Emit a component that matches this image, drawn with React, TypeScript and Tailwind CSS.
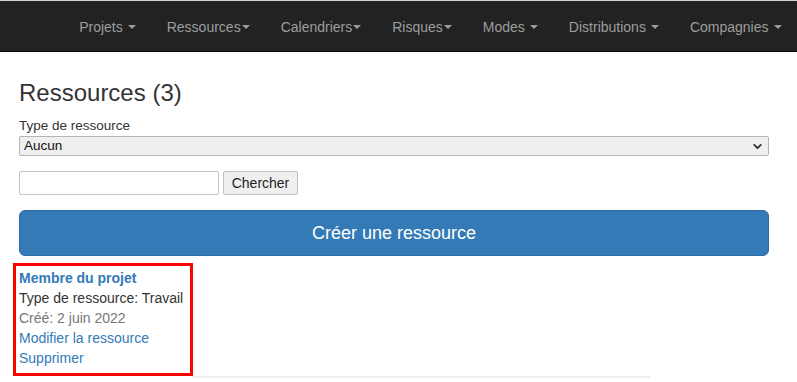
import { ChevronDown } from "lucide-react";

const NAV_ITEMS = [
  { label: "Projets", spaced: true },
  { label: "Ressources", spaced: false },
  { label: "Calendriers", spaced: false },
  { label: "Risques", spaced: false },
  { label: "Modes", spaced: true },
  { label: "Distributions", spaced: true },
  { label: "Compagnies", spaced: true },
];

function Caret() {
  return (
    <span className="inline-block h-0 w-0 border-x-4 border-t-4 border-x-transparent border-t-[#9d9d9d] align-middle" />
  );
}

function Navbar() {
  return (
    <nav className="flex h-[52px] items-center justify-end border-t border-b border-t-[#d0d0d0] border-b-[#080808] bg-[#222222] pt-[1px]">
      <ul className="flex">
        {NAV_ITEMS.map((item) => (
          <li key={item.label}>
            <a className="flex items-center px-[15.5px] text-[14px] leading-5 text-[#9d9d9d]">
              {item.label}
              <span className={item.spaced ? "ml-[5px] flex" : "ml-[1px] flex"}>
                <Caret />
              </span>
            </a>
          </li>
        ))}
      </ul>
    </nav>
  );
}

function ResourceCard() {
  return (
    <div className="ml-[13px] w-[180px] border-[3px] border-[#ff0000] px-[3px] pt-[2px] pb-[5px] text-[14px] leading-5">
      <a className="block font-bold text-[#337ab7]">Membre du projet</a>
      <p className="text-[#333333]">Type de ressource: Travail</p>
      <p className="text-[#777777]">Créé: 2 juin 2022</p>
      <a className="block text-[#337ab7]">Modifier la ressource</a>
      <a className="block text-[#337ab7]">Supprimer</a>
    </div>
  );
}

export default function App() {
  return (
    <div className="min-h-[382px] bg-white font-['Liberation_Sans',Arial,sans-serif] text-[#333333]">
      <Navbar />
      <main className="pt-[27px]">
        <div className="px-[19px]">
          <h3 className="text-[24px] leading-[27px] font-normal">Ressources (3)</h3>
          <label className="mt-[11px] block text-[13.5px] leading-[18px]">Type de ressource</label>
          <div className="mt-[1px] flex h-[20px] w-[750px] items-center justify-between rounded-[2px] border border-[#b5b5b5] bg-[#efefef] pr-[4px] pl-[4px] text-[13.5px] text-[#111]">
            <span>Aucun</span>
            <ChevronDown size={13} strokeWidth={3.5} className="text-[#333]" />
          </div>
          <form className="mt-[15px] flex gap-[4px]">
            <input
              type="text"
              className="h-[24px] w-[200px] rounded-[2px] border border-[#c5c5c5] bg-white px-[3px] text-[13.5px]"
            />
            <button
              type="button"
              className="h-[24px] w-[75px] rounded-[2px] border border-[#c0c0c0] bg-[#efefef] text-[14px] text-[#222]"
            >
              Chercher
            </button>
          </form>
          <button
            type="button"
            className="mt-[15px] flex h-[46px] w-[750px] items-center justify-center rounded-[6px] border border-[#2e6da4] bg-[#337ab7] text-[18px] text-white"
          >
            Créer une ressource
          </button>
        </div>
        <div className="mt-[7px]">
          <ResourceCard />
        </div>
        <div className="ml-[192px] h-[2px] w-[458px] bg-[#eeeeee]" />
      </main>
    </div>
  );
}
